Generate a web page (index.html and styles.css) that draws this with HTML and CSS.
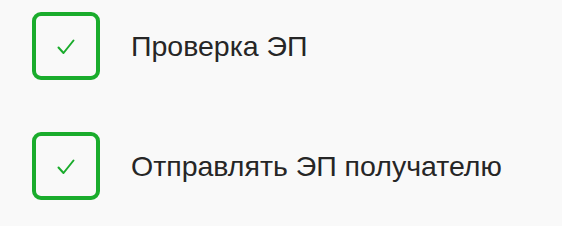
FILE: index.html
```html
<!DOCTYPE html>
<html lang="ru">
<head>
<meta charset="utf-8">
<link rel="stylesheet" href="styles.css">
</head>
<body>
<div class="list">
  <label class="row">
    <span class="box">
      <svg class="tick" viewBox="0 0 18 16" width="18" height="16"><path d="M1.5 8.5 L6.5 14 L16.5 1.5" fill="none" stroke="#1aac2c" stroke-width="2" stroke-linecap="round" stroke-linejoin="round"/></svg>
    </span>
    <span class="text">Проверка ЭП</span>
  </label>
  <label class="row">
    <span class="box">
      <svg class="tick" viewBox="0 0 18 16" width="18" height="16"><path d="M1.5 8.5 L6.5 14 L16.5 1.5" fill="none" stroke="#1aac2c" stroke-width="2" stroke-linecap="round" stroke-linejoin="round"/></svg>
    </span>
    <span class="text">Отправлять ЭП получателю</span>
  </label>
</div>
</body>
</html>
```
FILE: styles.css
```css
html, body {
  margin: 0;
  background: #f9f9f9;
}
body {
  width: 562px;
  height: 226px;
  overflow: hidden;
  font-family: "Liberation Sans", Arial, sans-serif;
}
.list {
  display: flex;
  flex-direction: column;
  gap: 52px;
  padding: 12px 0 0 32px;
}
.row {
  display: flex;
  align-items: center;
  gap: 31px;
}
.box {
  box-sizing: border-box;
  width: 68px;
  height: 68px;
  border: 4px solid #1aac2c;
  border-radius: 9px;
  display: flex;
  align-items: center;
  justify-content: center;
  flex: none;
}
.tick {
  display: block;
  margin-top: 2px;
}
.text {
  font-size: 28.5px;
  color: #262626;
}
```
